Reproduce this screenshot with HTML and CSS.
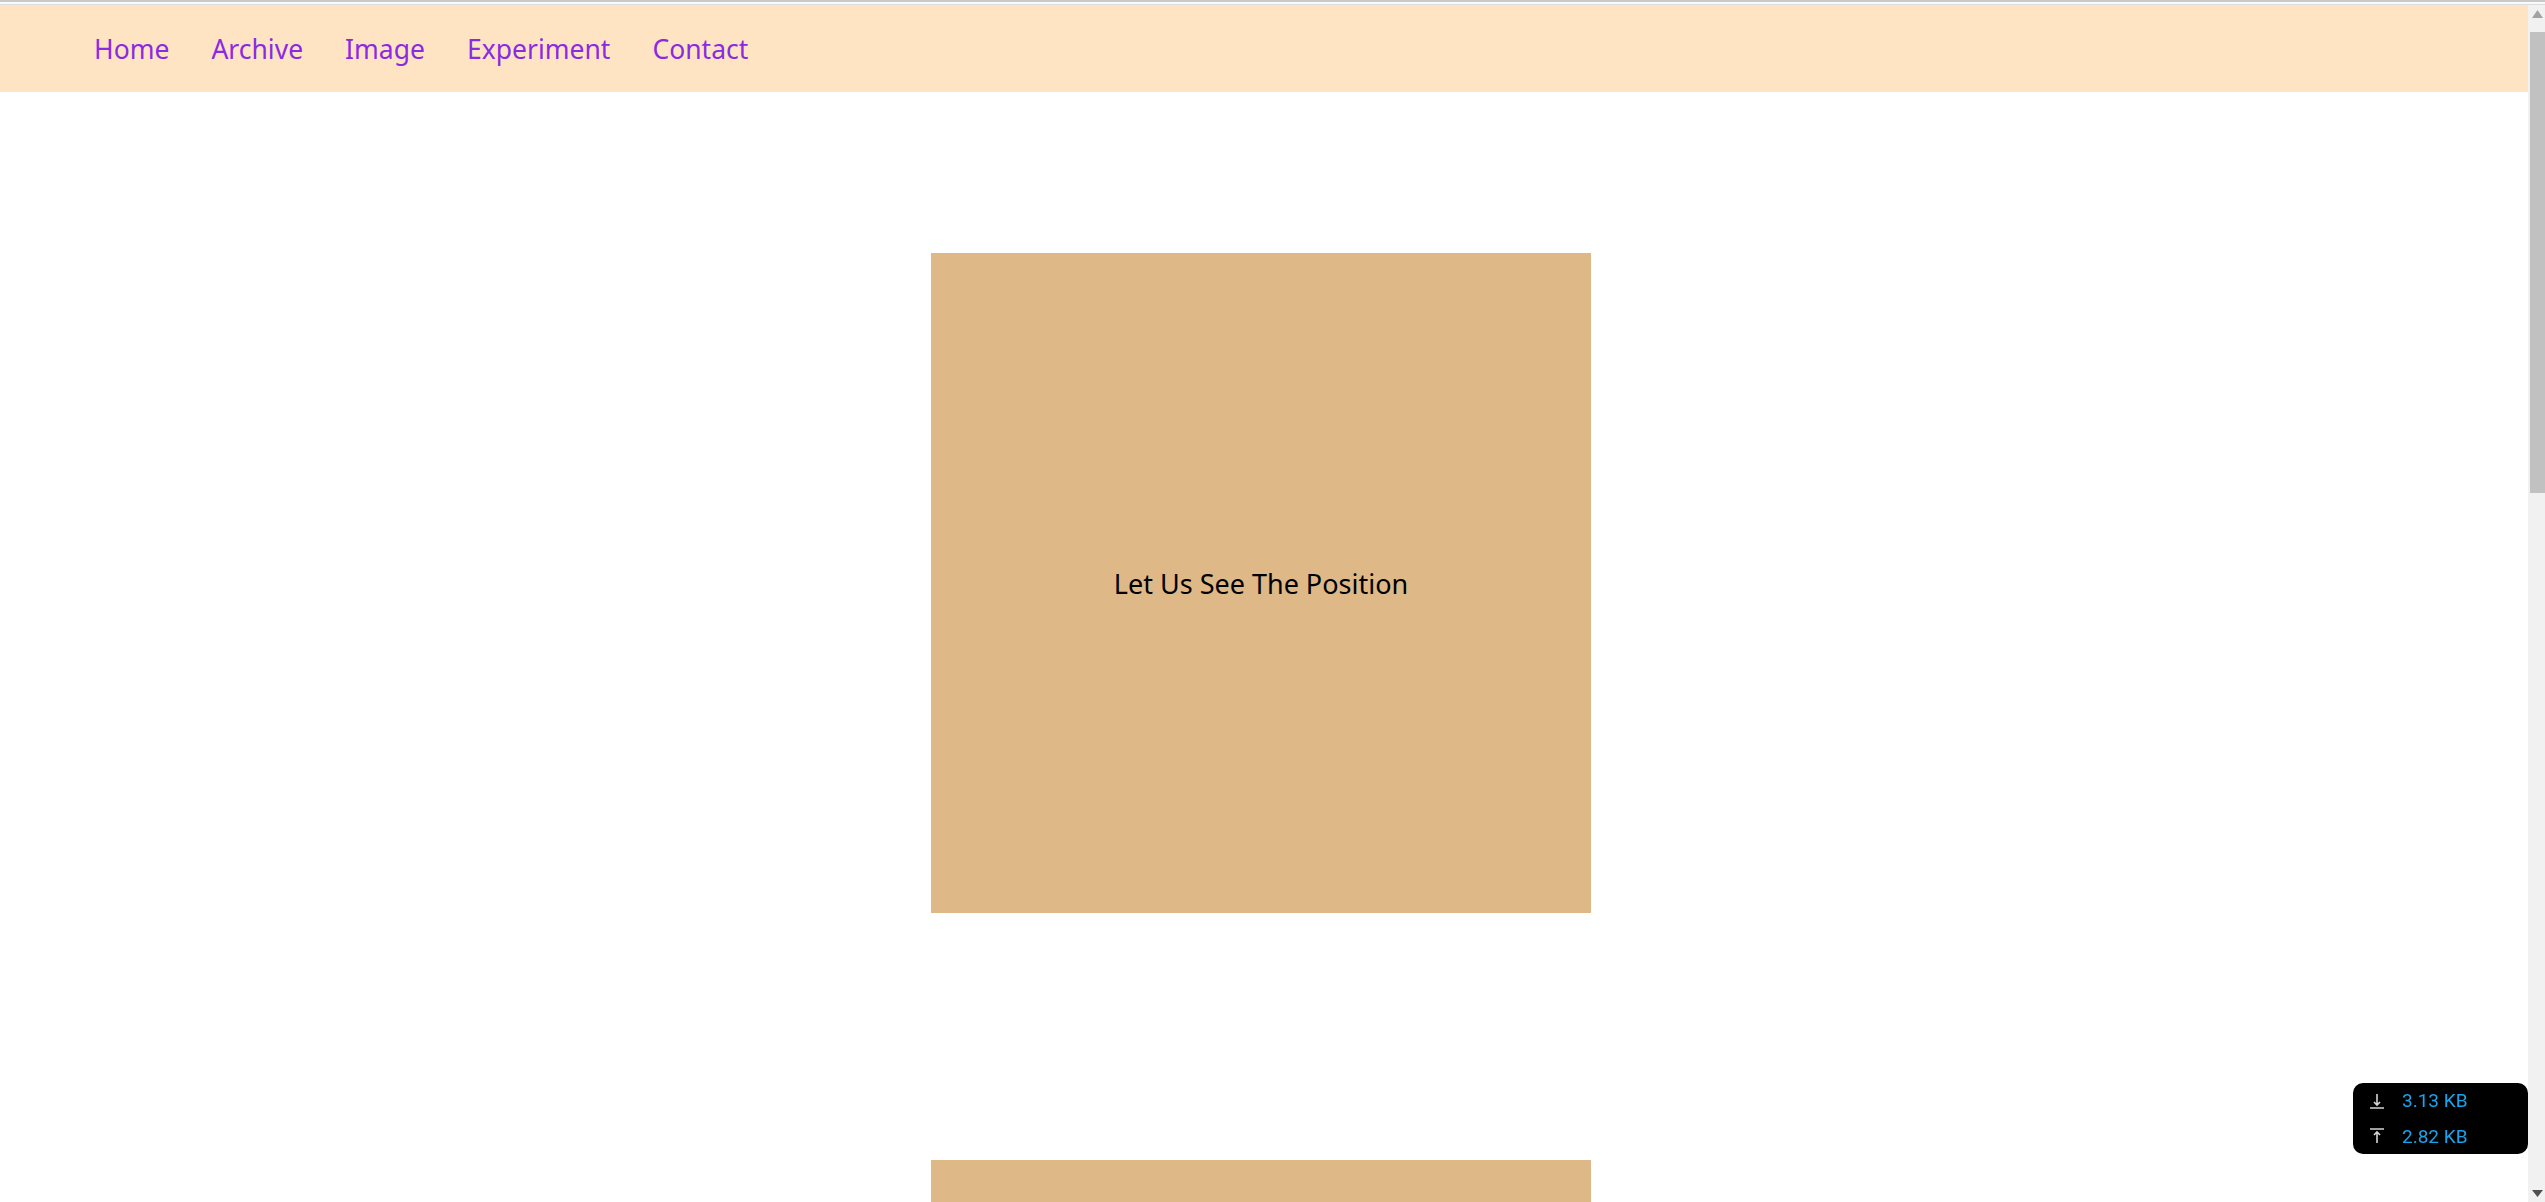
FILE: index.html
```html
<!DOCTYPE html>
<html lang="en">
<head>
<meta charset="utf-8">
<title>Position</title>
<link rel="stylesheet" href="styles.css">
</head>
<body>
<div class="chrome-line"></div>
<div class="window">
  <div class="viewport">
    <nav class="nav">
      <a class="nav-link" href="#">Home</a>
      <a class="nav-link" href="#">Archive</a>
      <a class="nav-link" href="#">Image</a>
      <a class="nav-link" href="#">Experiment</a>
      <a class="nav-link" href="#">Contact</a>
    </nav>
    <main class="content">
      <div class="box">Let Us See The Position</div>
      <div class="box"></div>
    </main>
  </div>
  <div class="scrollbar">
    <div class="sb-btn">
      <svg viewBox="0 0 11 8" width="11" height="8"><path d="M0 8L5.5 0L11 8z" fill="#a3a3a3"/></svg>
    </div>
    <div class="sb-track">
      <div class="sb-thumb"></div>
    </div>
    <div class="sb-btn sb-btn-down">
      <svg viewBox="0 0 11 7" width="11" height="7"><path d="M0 0L5.5 7L11 0z" fill="#505050"/></svg>
    </div>
  </div>
</div>
<div class="net-widget">
  <div class="net-row">
    <svg class="net-icon" viewBox="0 0 16 16" width="16" height="16"><path d="M8 1v11M5 9l3 3 3-3M1 15h14" fill="none" stroke="#d4d4d4" stroke-width="1.6"/></svg>
    <span class="net-val">3.13 KB</span>
  </div>
  <div class="net-row">
    <svg class="net-icon" viewBox="0 0 16 16" width="16" height="16"><path d="M1 1h14M8 4v11M5 7l3-3 3 3" fill="none" stroke="#d4d4d4" stroke-width="1.6"/></svg>
    <span class="net-val">2.82 KB</span>
  </div>
</div>
</body>
</html>
```
FILE: styles.css
```css
html, body {
  margin: 0;
  padding: 0;
  height: 100%;
  overflow: hidden;
  background: #fff;
}
body {
  font-family: "Noto Sans", "Open Sans", sans-serif;
}
.chrome-line {
  height: 5px;
  box-sizing: border-box;
  border-top: 2px solid #c9c9c9;
  border-bottom: 1px solid #dcdcdc;
  background: #fafafa;
}
.window {
  display: flex;
  height: calc(100vh - 5px);
}
.viewport {
  flex: 1;
  overflow: hidden;
}
.scrollbar {
  width: 17px;
  flex: none;
  background: #f1f1f1;
  display: flex;
  flex-direction: column;
}
.sb-btn {
  height: 17px;
  flex: none;
  display: flex;
  align-items: center;
  justify-content: center;
  padding-left: 1px;
}
.sb-btn-down {
  margin-top: auto;
}
.sb-track {
  flex: 1;
  padding-top: 10px;
}
.sb-thumb {
  height: 461px;
  margin: 0 0 0 2px;
  background: #c1c1c1;
}
.nav {
  height: 87px;
  background: #ffe4c4;
  display: flex;
  align-items: center;
  gap: 42px;
  padding-left: 94px;
}
.nav-link {
  color: #8a2be2;
  text-decoration: none;
  font-size: 26.5px;
}
.content {
  display: flex;
  flex-direction: column;
  align-items: center;
  gap: 247px;
  padding: 161px 6px 247px 0;
}
.box {
  width: 660px;
  height: 660px;
  background: #deb887;
  display: flex;
  align-items: center;
  justify-content: center;
  font-size: 27px;
  color: #000;
}
.net-widget {
  position: fixed;
  right: 17px;
  bottom: 48px;
  width: 175px;
  height: 71px;
  box-sizing: border-box;
  background: #000;
  border-radius: 10px;
  padding-left: 16px;
  display: flex;
  flex-direction: column;
  font-family: Roboto, "Noto Sans", sans-serif;
}
.net-row {
  display: flex;
  align-items: center;
  gap: 17px;
  height: 36px;
}
.net-val {
  color: #17a4ec;
  font-size: 19px;
}
```
